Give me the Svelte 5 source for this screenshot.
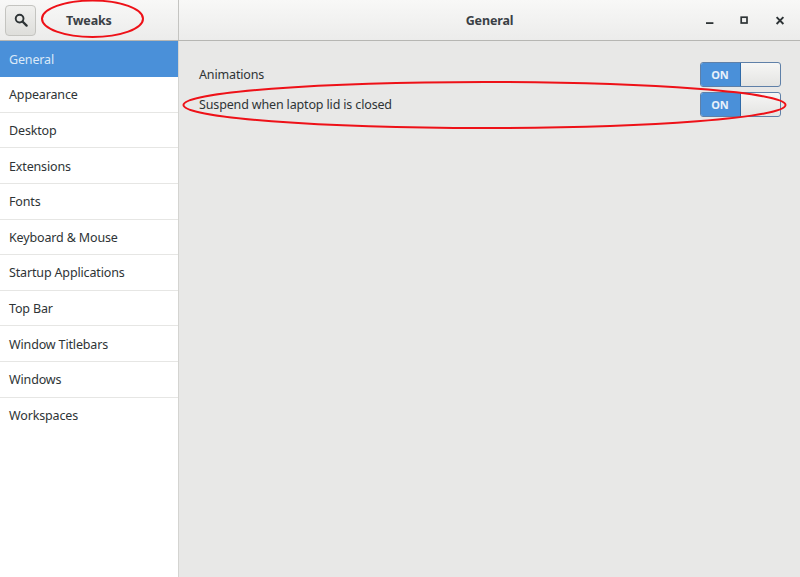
<script>
  const items = ['General','Appearance','Desktop','Extensions','Fonts','Keyboard & Mouse','Startup Applications','Top Bar','Window Titlebars','Windows','Workspaces'];
  const settings = ['Animations','Suspend when laptop lid is closed'];
</script>

<div class="window">
  <header class="titlebar">
    <div class="left">
      <button class="search" aria-label="Search">
        <svg width="14" height="14" viewBox="0 0 14 14"><circle cx="5.6" cy="5.6" r="3.9" fill="none" stroke="#2e3436" stroke-width="1.9"/><path d="M8.5 8.5L12.6 12.6" stroke="#2e3436" stroke-width="2.3" stroke-linecap="round"/></svg>
      </button>
      <span class="app">Tweaks</span>
    </div>
    <div class="right">
      <span class="title">General</span>
      <div class="controls">
        <svg width="12" height="12" viewBox="0 0 12 12"><rect x="4" y="8.2" width="7.4" height="1.8" fill="#2e3436"/></svg>
        <svg width="12" height="12" viewBox="0 0 12 12"><rect x="3.2" y="3.2" width="5.8" height="5.8" fill="none" stroke="#2e3436" stroke-width="1.7"/></svg>
        <svg width="12" height="12" viewBox="0 0 12 12"><path d="M2.6 3.2L9.4 10M9.4 3.2L2.6 10" stroke="#2e3436" stroke-width="1.9"/></svg>
      </div>
    </div>
  </header>
  <div class="body">
    <nav class="sidebar">
      {#each items as item, i}
        <div class="item" class:selected={i === 0} class:last={i === items.length - 1}>{item}</div>
      {/each}
    </nav>
    <main class="content">
      {#each settings as s}
        <div class="row">
          <span class="label">{s}</span>
          <div class="switch"><span class="on">ON</span><span class="knob"></span></div>
        </div>
      {/each}
    </main>
  </div>
  <svg class="marks" width="800" height="577" viewBox="0 0 800 577">
    <ellipse cx="92.5" cy="18.8" rx="50.5" ry="18.2" fill="none" stroke="#ee1118" stroke-width="2"/>
    <ellipse cx="484.5" cy="105" rx="301" ry="23" fill="none" stroke="#ee1118" stroke-width="2"/>
  </svg>
</div>

<style>
  :global(body){margin:0;}
  .window{position:relative;width:800px;height:577px;overflow:hidden;background:#e8e8e7;font-family:"Noto Sans","Open Sans",sans-serif;font-size:12.5px;letter-spacing:-0.15px;color:#2e3436;}
  .titlebar{display:flex;height:41px;box-sizing:border-box;border-bottom:1px solid #b6b6b3;background:linear-gradient(#f8f8f7,#ececeb);}
  .left{width:179px;box-sizing:border-box;border-right:1px solid #c4c4c1;display:flex;align-items:center;padding-left:5px;}
  .search{width:31px;height:31px;padding:0;display:flex;align-items:center;justify-content:center;border:1px solid #c4c4c0;border-radius:4px;background:linear-gradient(#f0f0ee,#dededb);}
  .app{font-weight:700;margin-left:30px;color:#3a4045;}
  .right{flex:1;position:relative;display:flex;align-items:center;justify-content:center;}
  .title{font-weight:700;color:#3a4045;}
  .controls{position:absolute;right:14px;top:14px;display:flex;gap:24px;}
  .body{display:flex;height:536px;}
  .sidebar{width:179px;box-sizing:border-box;background:#fff;border-right:1px solid #d4d4d1;}
  .item{height:35.6px;box-sizing:border-box;padding:1px 0 0 9px;display:flex;align-items:center;border-bottom:1px solid #e6e6e4;color:#2e3436;}
  .selected{height:36.2px;padding-top:0;background:#4a90d9;color:#dbe9f8;border-bottom:none;}
  .last{border-bottom:none;}
  .content{flex:1;padding:21px 19.5px 0 20px;}
  .row{height:29.5px;display:flex;align-items:flex-start;justify-content:space-between;}
  .label{margin-top:4px;}
  .switch{width:81px;height:25px;box-sizing:border-box;display:flex;border:1px solid #5f80a8;border-radius:3px;overflow:hidden;background:linear-gradient(#f6f6f5,#e4e4e2);}
  .on{width:40px;box-sizing:border-box;background:#4a90d9;color:#e8f1fb;font-size:11px;letter-spacing:0;font-weight:700;display:flex;align-items:center;justify-content:center;border-right:1px solid #2f6aa8;}
  .knob{flex:1;}
  .marks{position:absolute;left:0;top:0;pointer-events:none;}
</style>
